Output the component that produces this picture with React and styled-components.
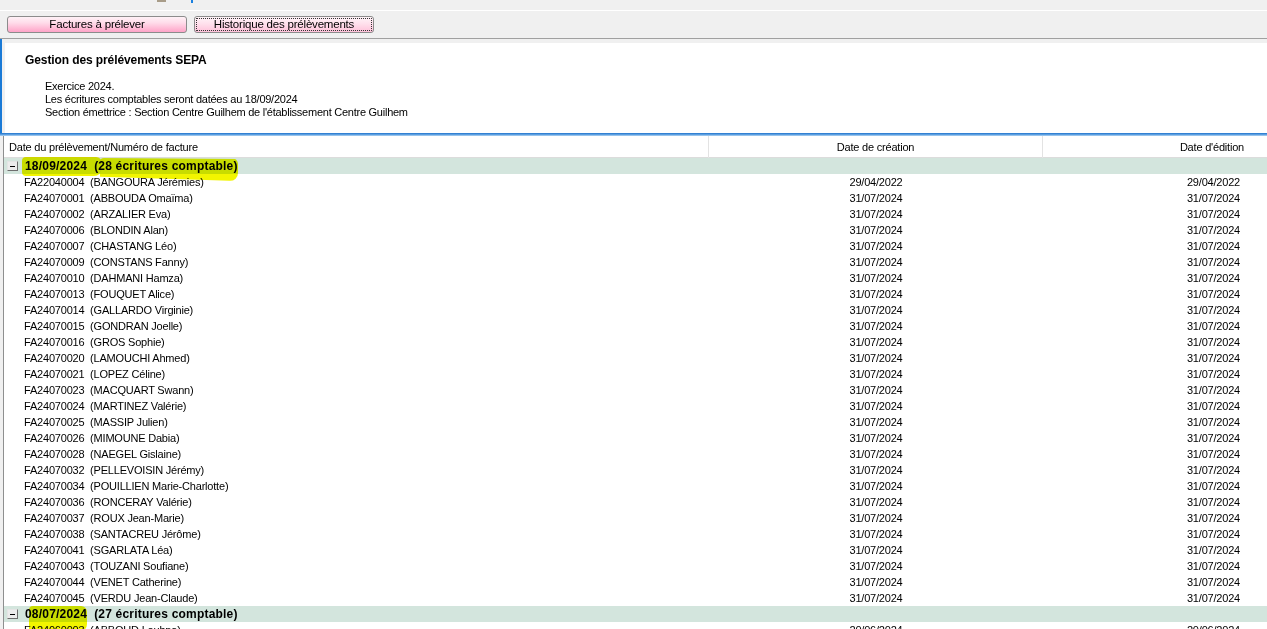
import React from "react";
import styled, { createGlobalStyle } from "styled-components";

const GlobalStyle = createGlobalStyle`
  html, body {
    margin: 0;
    padding: 0;
    background: #f0f0f0;
  }
  body {
    font-family: "Liberation Sans", Arial, sans-serif;
    font-size: 11px;
    color: #000;
  }
`;

const Window = styled.div`
  position: relative;
  width: 1267px;
  height: 629px;
  overflow: hidden;
  background: #f0f0f0;
  display: flex;
  flex-direction: column;
`;

const TopStrip = styled.div`
  height: 10px;
  border-bottom: 1px solid #ffffff;
  display: flex;
  align-items: flex-start;
  gap: 25px;
  padding-left: 157px;
`;

const Toolbar = styled.div`
  box-sizing: border-box;
  height: 28px;
  display: flex;
  align-items: flex-start;
  gap: 7px;
  padding: 5px 0 0 7px;
  border-bottom: 1px solid #a0a0a0;
`;

const PinkButton = styled.button`
  box-sizing: border-box;
  width: 180px;
  height: 17px;
  padding: 0;
  border: 1px solid #8c8c8c;
  border-radius: 3px;
  background: ${(p) =>
    p.$focused
      ? "linear-gradient(#fff4f8 0%, #ffe0ec 45%, #ffc2da 100%)"
      : "linear-gradient(#fff2f7 0%, #ffdbe9 40%, #ffa4c8 100%)"};
  font-family: "Liberation Sans", Arial, sans-serif;
  font-size: 11.5px;
  letter-spacing: -0.2px;
  color: #000;
  line-height: 15px;
  outline: ${(p) => (p.$focused ? "1px dotted #333" : "none")};
  outline-offset: -3px;
`;

const InfoArea = styled.div`
  border-left: 2px solid #1a7ad6;
  padding: 4px 0 0 3px;
`;

const InfoPanel = styled.div`
  box-sizing: border-box;
  height: 90px;
  background: #ffffff;
  padding: 10px 0 0 20px;
`;

const Title = styled.div`
  font-weight: bold;
  font-size: 12px;
  line-height: 15px;
  letter-spacing: -0.1px;
`;

const InfoLines = styled.div`
  margin-top: 12px;
  padding-left: 20px;
  line-height: 13px;
  letter-spacing: -0.25px;
`;

const Splitter = styled.div`
  height: 3px;
  background: linear-gradient(#1e72cc, #5a9ee0 50%, #b5d5f2);
`;

const ListFrame = styled.div`
  flex: 1;
  margin-left: 3px;
  border-left: 1px solid #8e8f8f;
  background: #ffffff;
  overflow: hidden;
`;

const Columns = styled.div`
  display: grid;
  grid-template-columns: 705px 334px 1fr;
`;

const HeaderRow = styled(Columns)`
  box-sizing: border-box;
  height: 22px;
  border-bottom: 1px solid #dcdcdc;
`;

const HeaderCell = styled.div`
  line-height: 22px;
  letter-spacing: -0.2px;
  padding: ${(p) => (p.$align === "left" ? "0 0 0 5px" : p.$align === "right" ? "0 23px 0 0" : "0")};
  text-align: ${(p) => p.$align};
  border-right: ${(p) => (p.$last ? "none" : "1px solid #e3e3e3")};
  white-space: nowrap;
`;

const GroupRow = styled.div`
  height: 16px;
  background: #d3e5dd;
  display: flex;
  align-items: center;
  gap: 7px;
  padding-left: 3px;
`;

const Expander = styled.span`
  box-sizing: border-box;
  width: 11px;
  height: 10px;
  border: 1px solid;
  border-color: #e4e4e4 #6e6e6e #6e6e6e #e4e4e4;
  background: #ececec;
  display: flex;
  align-items: center;
  justify-content: center;
  &::after {
    content: "";
    width: 5px;
    height: 1px;
    background: #000;
  }
`;

const GroupLabel = styled.span`
  font-weight: bold;
  font-size: 12px;
  letter-spacing: 0.2px;
  white-space: pre;
`;

const DataRow = styled(Columns)`
  height: 16px;
  line-height: 16px;
  letter-spacing: -0.2px;
`;

const Cell = styled.div`
  white-space: pre;
  text-align: ${(p) => p.$align};
  padding: ${(p) => (p.$align === "left" ? "0 0 0 20px" : p.$align === "right" ? "0 27px 0 0" : "0")};
`;

const Highlight = styled.span`
  position: absolute;
  left: ${(p) => p.$x}px;
  top: ${(p) => p.$y}px;
  width: ${(p) => p.$w}px;
  height: ${(p) => p.$h}px;
  background: #f2f500;
  mix-blend-mode: multiply;
  border-radius: 4px 6px 8px 4px;
  clip-path: ${(p) => p.$clip || "none"};
`;

const rows1 = [
  ["FA22040004", "BANGOURA Jérémies", "29/04/2022", "29/04/2022"],
  ["FA24070001", "ABBOUDA Omaïma"],
  ["FA24070002", "ARZALIER Eva"],
  ["FA24070006", "BLONDIN Alan"],
  ["FA24070007", "CHASTANG Léo"],
  ["FA24070009", "CONSTANS Fanny"],
  ["FA24070010", "DAHMANI Hamza"],
  ["FA24070013", "FOUQUET Alice"],
  ["FA24070014", "GALLARDO Virginie"],
  ["FA24070015", "GONDRAN Joelle"],
  ["FA24070016", "GROS Sophie"],
  ["FA24070020", "LAMOUCHI Ahmed"],
  ["FA24070021", "LOPEZ Céline"],
  ["FA24070023", "MACQUART Swann"],
  ["FA24070024", "MARTINEZ Valérie"],
  ["FA24070025", "MASSIP Julien"],
  ["FA24070026", "MIMOUNE Dabia"],
  ["FA24070028", "NAEGEL Gislaine"],
  ["FA24070032", "PELLEVOISIN Jérémy"],
  ["FA24070034", "POUILLIEN Marie-Charlotte"],
  ["FA24070036", "RONCERAY Valérie"],
  ["FA24070037", "ROUX Jean-Marie"],
  ["FA24070038", "SANTACREU Jérôme"],
  ["FA24070041", "SGARLATA Léa"],
  ["FA24070043", "TOUZANI Soufiane"],
  ["FA24070044", "VENET Catherine"],
  ["FA24070045", "VERDU Jean-Claude"],
];

const rows2 = [["FA24060003", "ABBOUD Loubna", "20/06/2024", "20/06/2024"]];

const groups = [
  { date: "18/09/2024", count: 28, rows: rows1 },
  { date: "08/07/2024", count: 27, rows: rows2 },
];

export default function App() {
  return (
    <>
      <GlobalStyle />
      <Window>
        <TopStrip>
          <svg width="9" height="3" viewBox="0 0 9 3">
            <rect x="0" y="0" width="9" height="2" fill="#a89c88" />
          </svg>
          <svg width="3" height="4" viewBox="0 0 3 4">
            <rect x="0" y="0" width="2" height="3" fill="#1a80e0" />
          </svg>
        </TopStrip>
        <Toolbar>
          <PinkButton>Factures à prélever</PinkButton>
          <PinkButton $focused>Historique des prélèvements</PinkButton>
        </Toolbar>
        <InfoArea>
          <InfoPanel>
            <Title>Gestion des prélévements SEPA</Title>
            <InfoLines>
              <div>Exercice 2024.</div>
              <div>Les écritures comptables seront datées au 18/09/2024</div>
              <div>Section émettrice : Section Centre Guilhem de l'établissement Centre Guilhem</div>
            </InfoLines>
          </InfoPanel>
        </InfoArea>
        <Splitter />
        <ListFrame>
          <HeaderRow>
            <HeaderCell $align="left">Date du prélèvement/Numéro de facture</HeaderCell>
            <HeaderCell $align="center">Date de création</HeaderCell>
            <HeaderCell $align="right" $last>
              Date d'édition
            </HeaderCell>
          </HeaderRow>
          {groups.map((g) => (
            <React.Fragment key={g.date}>
              <GroupRow>
                <Expander />
                <GroupLabel>{`${g.date}  (${g.count} écritures comptable)`}</GroupLabel>
              </GroupRow>
              {g.rows.map(([num, name, c = "31/07/2024", e = "31/07/2024"]) => (
                <DataRow key={num}>
                  <Cell $align="left">{`${num}  (${name})`}</Cell>
                  <Cell $align="center">{c}</Cell>
                  <Cell $align="right">{e}</Cell>
                </DataRow>
              ))}
            </React.Fragment>
          ))}
        </ListFrame>
        <Highlight $x={22} $y={157} $w={80} $h={19} />
        <Highlight $x={100} $y={158} $w={138} $h={23} $clip="polygon(0 0, 100% 4%, 100% 100%, 0 82%)" />
        <Highlight $x={29} $y={606} $w={58} $h={26} />
      </Window>
    </>
  );
}
